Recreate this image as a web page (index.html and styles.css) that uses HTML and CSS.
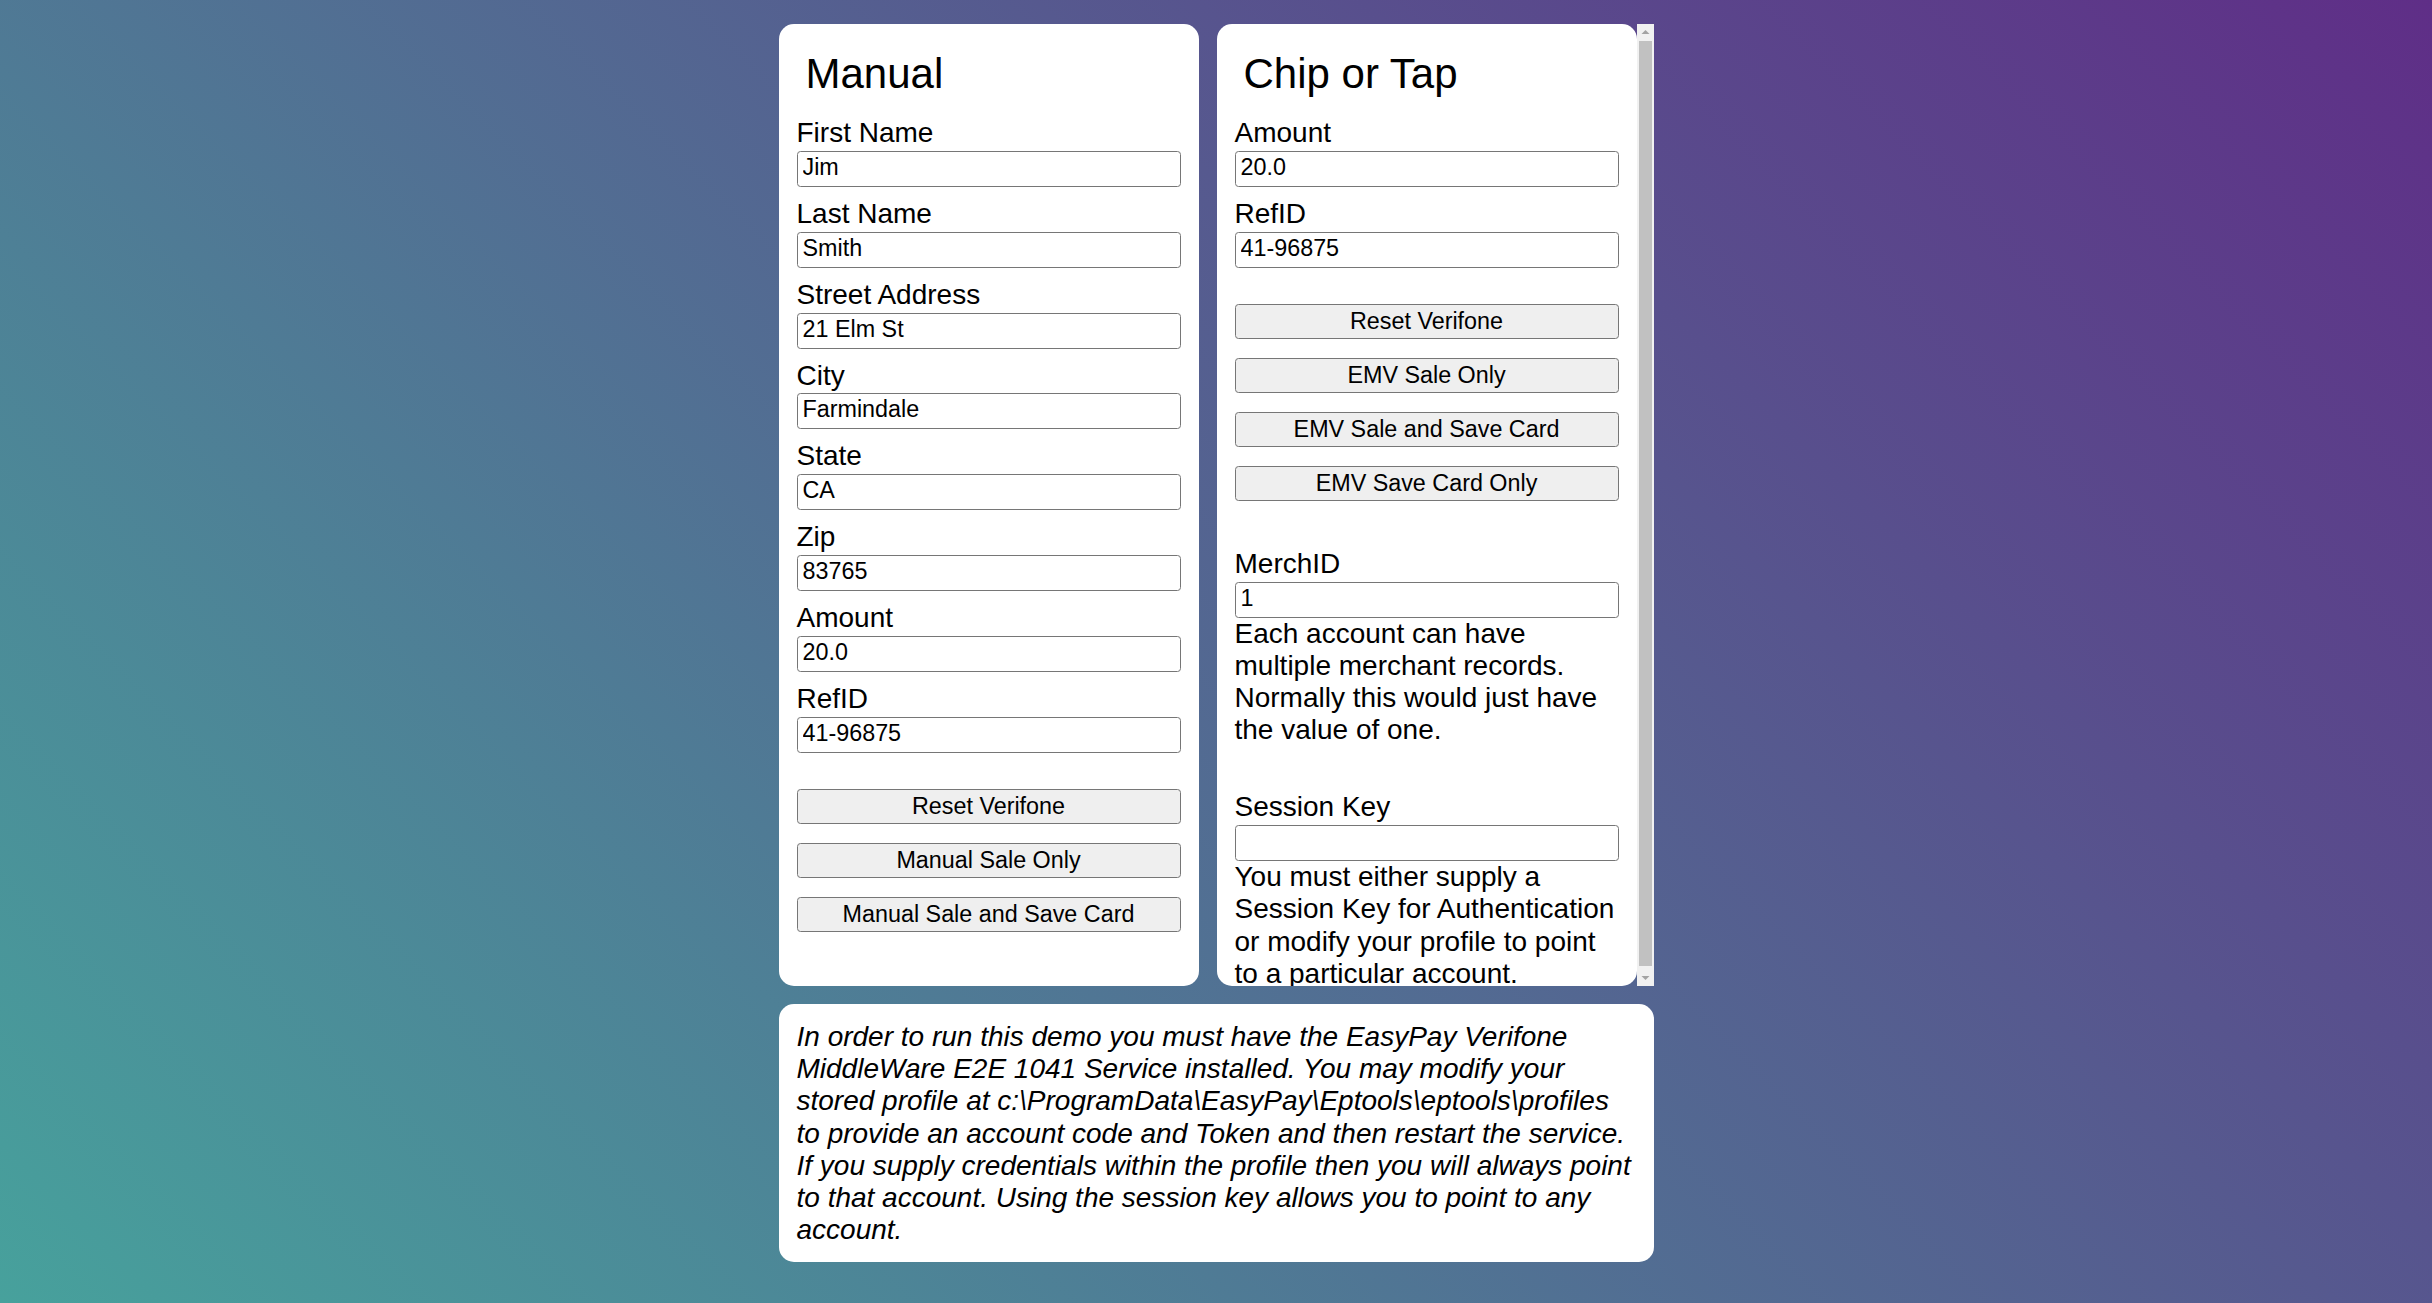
FILE: index.html
```html
<!DOCTYPE html>
<html lang="en">
<head>
<meta charset="utf-8">
<title>EasyPay Verifone Demo</title>
<link rel="stylesheet" href="styles.css">
</head>
<body>
<main class="page">
  <section class="card">
    <h2 class="card-title">Manual</h2>
    <div class="field"><label>First Name</label><input class="text-input" type="text" value="Jim"></div>
    <div class="field"><label>Last Name</label><input class="text-input" type="text" value="Smith"></div>
    <div class="field"><label>Street Address</label><input class="text-input" type="text" value="21 Elm St"></div>
    <div class="field"><label>City</label><input class="text-input" type="text" value="Farmindale"></div>
    <div class="field"><label>State</label><input class="text-input" type="text" value="CA"></div>
    <div class="field"><label>Zip</label><input class="text-input" type="text" value="83765"></div>
    <div class="field"><label>Amount</label><input class="text-input" type="text" value="20.0"></div>
    <div class="field"><label>RefID</label><input class="text-input" type="text" value="41-96875"></div>
    <div class="actions">
      <button class="btn" type="button">Reset Verifone</button>
      <button class="btn" type="button">Manual Sale Only</button>
      <button class="btn" type="button">Manual Sale and Save Card</button>
    </div>
  </section>

  <div class="chip-col">
    <section class="card card-clip">
      <h2 class="card-title">Chip or Tap</h2>
      <div class="field"><label>Amount</label><input class="text-input" type="text" value="20.0"></div>
      <div class="field"><label>RefID</label><input class="text-input" type="text" value="41-96875"></div>
      <div class="actions">
        <button class="btn" type="button">Reset Verifone</button>
        <button class="btn" type="button">EMV Sale Only</button>
        <button class="btn" type="button">EMV Sale and Save Card</button>
        <button class="btn" type="button">EMV Save Card Only</button>
      </div>
      <div class="section section-merch">
        <label>MerchID</label><input class="text-input" type="text" value="1">
        <p class="help">Each account can have multiple merchant records. Normally this would just have the value of one.</p>
      </div>
      <div class="section section-session">
        <label>Session Key</label><input class="text-input" type="text" value="">
        <p class="help">You must either supply a Session Key for Authentication or modify your profile to point to a particular account.</p>
      </div>
    </section>
    <div class="scrollbar" aria-hidden="true">
      <span class="sb-btn"><svg width="17" height="17" viewBox="0 0 17 17"><polygon points="4.5,10 8.5,6 12.5,10" fill="#a3a3a3"/></svg></span>
      <span class="sb-track"><span class="sb-thumb"></span></span>
      <span class="sb-btn"><svg width="17" height="17" viewBox="0 0 17 17"><polygon points="4.5,7 12.5,7 8.5,11" fill="#a3a3a3"/></svg></span>
    </div>
  </div>

  <section class="card note">
    <p>In order to run this demo you must have the EasyPay Verifone MiddleWare E2E 1041 Service installed. You may modify your stored profile at c:\ProgramData\EasyPay\Eptools\eptools\profiles to provide an account code and Token and then restart the service. If you supply credentials within the profile then you will always point to that account. Using the session key allows you to point to any account.</p>
  </section>
</main>
</body>
</html>
```

FILE: styles.css
```css
html {
  min-height: 100%;
  background: linear-gradient(45deg, #47a19c 0%, #5f2e87 100%);
}

body {
  margin: 0;
  font-family: "Liberation Sans", Arial, sans-serif;
  font-size: 28px;
  line-height: 1.15;
  color: #000;
}

.page {
  width: 875px;
  margin: 24px auto 0;
  display: grid;
  grid-template-columns: 420px 437px;
  grid-template-rows: 962px auto;
  column-gap: 18px;
  row-gap: 18px;
}

.card {
  background: #fff;
  border-radius: 15px;
  padding: 26px 18px 0;
  box-sizing: border-box;
}

.card-title {
  margin: 0 0 19px 9px;
  font-size: 42px;
  font-weight: normal;
  line-height: 1.15;
}

label {
  display: block;
}

.field {
  margin-bottom: 11px;
}

.text-input {
  display: block;
  box-sizing: border-box;
  width: 100%;
  height: 36px;
  margin: 1.6px 0 0;
  padding: 2px 5px 5px;
  border: 1px solid #767676;
  border-radius: 3.5px;
  background: #fff;
  font-family: "Liberation Sans", Arial, sans-serif;
  font-size: 23.33px;
  line-height: 1.15;
  color: #000;
  outline: none;
}

.actions {
  margin-top: 36px;
}

.btn {
  display: block;
  box-sizing: border-box;
  width: 100%;
  height: 35px;
  margin: 0 0 19px;
  padding: 0;
  border: 1px solid #767676;
  border-radius: 3.5px;
  background: #efefef;
  font-family: "Liberation Sans", Arial, sans-serif;
  font-size: 23.33px;
  line-height: 1.15;
  color: #000;
}

/* right column: clipped card + its scrollbar */
.chip-col {
  display: flex;
  height: 962px;
}

.card-clip {
  flex: 0 0 420px;
  height: 962px;
  overflow: hidden;
}

.scrollbar {
  flex: 0 0 17px;
  display: flex;
  flex-direction: column;
  background: #f1f1f1;
}

.sb-btn {
  flex: 0 0 17px;
  height: 17px;
  display: block;
}

.sb-btn svg {
  display: block;
}

.sb-track {
  flex: 1;
  display: flex;
  flex-direction: column;
  padding: 0 2px 3px;
}

.sb-thumb {
  flex: 1;
  background: #c1c1c1;
}

.section-merch {
  margin-top: 47px;
}

.section-session {
  margin-top: 45px;
}

.help {
  margin: 0;
}

.note {
  grid-column: 1 / -1;
  padding: 17px 18px 16px;
}

.note p {
  margin: 0;
  font-style: italic;
}
```
